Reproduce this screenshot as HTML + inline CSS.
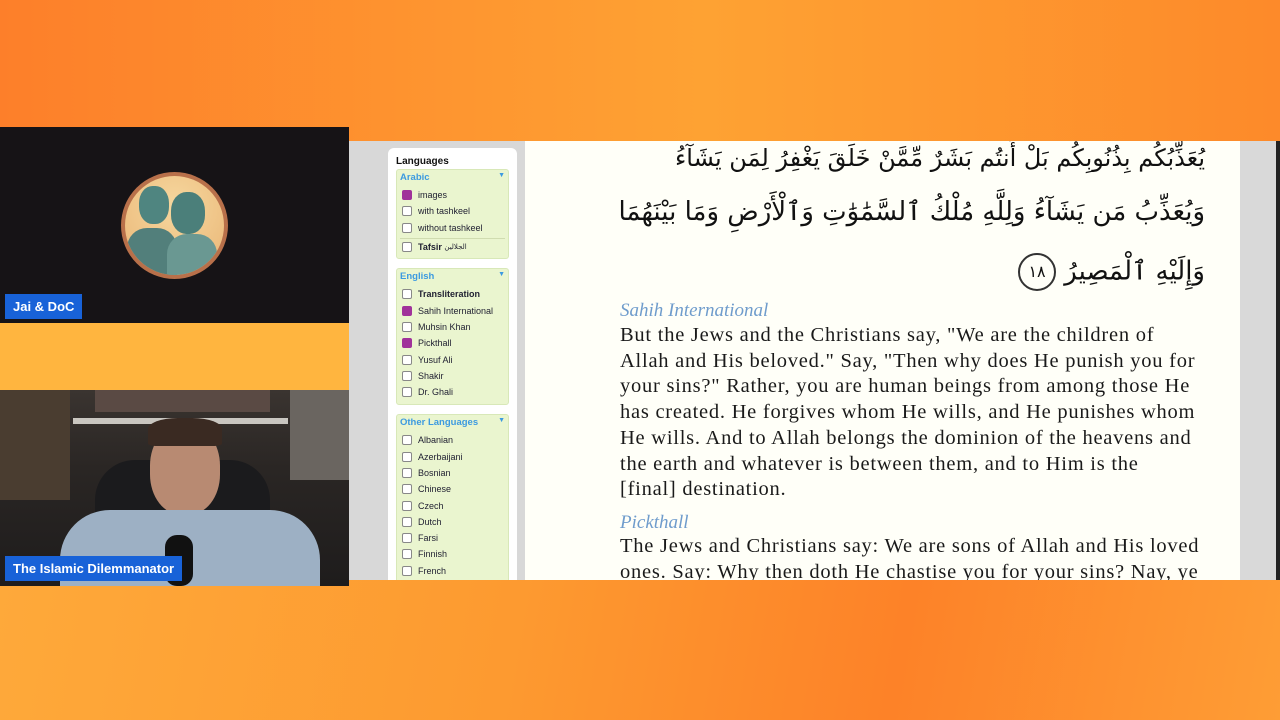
<!DOCTYPE html>
<html><head><meta charset="utf-8">
<style>
*{margin:0;padding:0;box-sizing:border-box}
body{width:1280px;height:720px;overflow:hidden;position:relative;font-family:"Liberation Sans",sans-serif;background:linear-gradient(90deg,#fd8a2a 0%,#fe9a30 50%,#fd8c2a 100%)}
.top{position:absolute;left:0;top:0;width:1280px;height:141px;background:linear-gradient(90deg,#fd7f2a,#fea233 55%,#fd8a2a)}
.bot{position:absolute;left:0;top:580px;width:1280px;height:140px;background:linear-gradient(100deg,#fea93a 0%,#fd9a30 40%,#fd8228 70%,#fe9d35 100%)}
.mid{position:absolute;left:0;top:323px;width:349px;height:67px;background:#ffb53f}
.cam1{position:absolute;left:0;top:127px;width:349px;height:196px;background:#161316}
.cam2{position:absolute;left:0;top:390px;width:349px;height:196px;background:linear-gradient(180deg,#3a3430 0%,#2a2624 40%,#1e1c1c 100%);overflow:hidden}
.tag{position:absolute;background:#1862d8;color:#fff;font-size:13px;font-weight:bold;padding:0 8px;line-height:25px}
.screen{position:absolute;left:349px;top:141px;width:931px;height:439px;background:#d8d8d8;overflow:hidden}
.side{position:absolute;left:39px;top:7px;width:129px;height:440px;background:#fff;border-radius:6px;padding:8px 8px}
.side h4{font-size:10px;color:#111;margin-bottom:2px}
.box{background:#eaf5cf;border:1px solid #d8e8b8;border-radius:3px;margin-bottom:9px;padding:2px 3px 4px}
.box .hd{color:#3c9ae0;font-weight:bold;font-size:9.5px;display:flex;justify-content:space-between;margin-bottom:4px}
.it{font-size:9px;color:#223;height:16.3px;display:flex;align-items:center}
.cb{width:10px;height:10px;border:1px solid #888;border-radius:2px;background:#fff;margin:0 6px 0 2px;flex:none}
.cb.on{background:#a0329a;border-color:#a0329a}
.content{position:absolute;left:176px;top:0;width:715px;height:439px;background:#fffff8}
.sb{position:absolute;left:891px;top:0;width:36px;height:439px;background:#d9d9d9}
.sbl{position:absolute;left:927px;top:0;width:4px;height:439px;background:#222}
.ar{position:absolute;right:35px;font-family:"DejaVu Sans",serif;font-size:26px;color:#111;direction:rtl;white-space:nowrap}
.tr{position:absolute;left:95px;font-family:"Liberation Serif",serif;font-size:20.5px;color:#1a1a1a;line-height:25.7px;white-space:nowrap;letter-spacing:0.75px}
.lbl{position:absolute;left:95px;font-family:"Liberation Serif",serif;font-style:italic;font-size:19px;color:#6f9ccc}
</style></head><body>
<div class="top"></div>
<div class="bot"></div>
<div class="mid"></div>
<div class="cam1">
 <div style="position:absolute;left:121px;top:45px;width:107px;height:107px;border-radius:50%;background:#b8704a;padding:4px">
  <div style="width:100%;height:100%;border-radius:50%;background:radial-gradient(circle at 50% 30%,#f6d79e,#e9b474);position:relative;overflow:hidden">
   <div style="position:absolute;left:14px;top:10px;width:30px;height:38px;border-radius:45%;background:#4f8580"></div>
   <div style="position:absolute;left:46px;top:16px;width:34px;height:42px;border-radius:45%;background:#4b7f7a"></div>
   <div style="position:absolute;left:2px;top:52px;width:50px;height:50px;border-radius:40% 40% 0 0;background:#527f7b"></div>
   <div style="position:absolute;left:42px;top:58px;width:50px;height:50px;border-radius:40% 40% 0 0;background:#6a9892"></div>
  </div>
 </div>
 <div class="tag" style="left:5px;top:167px">Jai &amp; DoC</div>
</div>
<div class="cam2">
 <div style="position:absolute;left:95px;top:0;width:175px;height:22px;background:#5a4a44"></div>
 <div style="position:absolute;left:73px;top:28px;width:215px;height:6px;background:#c9c6c0"></div>
 <div style="position:absolute;left:0;top:0;width:70px;height:110px;background:#4a3d30"></div>
 <div style="position:absolute;left:290px;top:0;width:59px;height:90px;background:#6a6560"></div>
 <div style="position:absolute;left:95px;top:70px;width:175px;height:126px;border-radius:40px 40px 0 0;background:#1b1b1d"></div>
 <div style="position:absolute;left:150px;top:35px;width:70px;height:90px;border-radius:45%;background:#b88a72"></div>
 <div style="position:absolute;left:148px;top:28px;width:74px;height:28px;border-radius:40% 40% 10% 10%;background:#3a2a22"></div>
 <div style="position:absolute;left:60px;top:120px;width:260px;height:76px;border-radius:50px 50px 0 0;background:#9db0c4"></div>
 <div style="position:absolute;left:165px;top:145px;width:28px;height:51px;border-radius:12px;background:#111"></div>
 <div class="tag" style="left:5px;top:166px">The Islamic Dilemmanator</div>
</div>
<div class="screen">
 <div class="side">
  <h4>Languages</h4>
  <div class="box"><div class="hd"><span>Arabic</span><span style="font-size:7px">▼</span></div>
   <div class="it"><span class="cb on"></span>images</div>
   <div class="it"><span class="cb"></span>with tashkeel</div>
   <div class="it"><span class="cb"></span>without tashkeel</div>
   <div class="it" style="border-top:1px solid #d0dcb0;margin-top:2px"><span class="cb"></span><b>Tafsir</b>&nbsp;<span style="font-family:'DejaVu Sans';font-size:7px">الجلالين</span></div>
  </div>
  <div class="box"><div class="hd"><span>English</span><span style="font-size:7px">▼</span></div>
   <div class="it"><span class="cb"></span><b>Transliteration</b></div>
   <div class="it"><span class="cb on"></span>Sahih International</div>
   <div class="it"><span class="cb"></span>Muhsin Khan</div>
   <div class="it"><span class="cb on"></span>Pickthall</div>
   <div class="it"><span class="cb"></span>Yusuf Ali</div>
   <div class="it"><span class="cb"></span>Shakir</div>
   <div class="it"><span class="cb"></span>Dr. Ghali</div>
  </div>
  <div class="box"><div class="hd"><span>Other Languages</span><span style="font-size:7px">▼</span></div>
   <div class="it"><span class="cb"></span>Albanian</div>
   <div class="it"><span class="cb"></span>Azerbaijani</div>
   <div class="it"><span class="cb"></span>Bosnian</div>
   <div class="it"><span class="cb"></span>Chinese</div>
   <div class="it"><span class="cb"></span>Czech</div>
   <div class="it"><span class="cb"></span>Dutch</div>
   <div class="it"><span class="cb"></span>Farsi</div>
   <div class="it"><span class="cb"></span>Finnish</div>
   <div class="it"><span class="cb"></span>French</div>
  </div>
 </div>
 <div class="content">
  <div class="ar" style="top:3px;font-size:24px">يُعَذِّبُكُم بِذُنُوبِكُم بَلْ أَنتُم بَشَرٌ مِّمَّنْ خَلَقَ يَغْفِرُ لِمَن يَشَآءُ</div>
  <div class="ar" style="top:56px">وَيُعَذِّبُ مَن يَشَآءُ وَلِلَّهِ مُلْكُ ٱلسَّمَٰوَٰتِ وَٱلْأَرْضِ وَمَا بَيْنَهُمَا</div>
  <div class="ar" style="top:112px">وَإِلَيْهِ ٱلْمَصِيرُ <span style="display:inline-block;width:38px;height:38px;border:2px solid #333;border-radius:50%;font-size:16px;text-align:center;line-height:34px;vertical-align:middle">١٨</span></div>
  <div class="lbl" style="top:159px">Sahih International</div>
  <div class="tr" style="top:182px">But the Jews and the Christians say, "We are the children of<br>Allah and His beloved." Say, "Then why does He punish you for<br>your sins?" Rather, you are human beings from among those He<br>has created. He forgives whom He wills, and He punishes whom<br>He wills. And to Allah belongs the dominion of the heavens and<br>the earth and whatever is between them, and to Him is the<br>[final] destination.</div>
  <div class="lbl" style="top:371px">Pickthall</div>
  <div class="tr" style="top:393px">The Jews and Christians say: We are sons of Allah and His loved<br>ones. Say: Why then doth He chastise you for your sins? Nay, ye</div>
 </div>
 <div class="sb"></div>
 <div class="sbl"></div>
</div>
</body></html>
